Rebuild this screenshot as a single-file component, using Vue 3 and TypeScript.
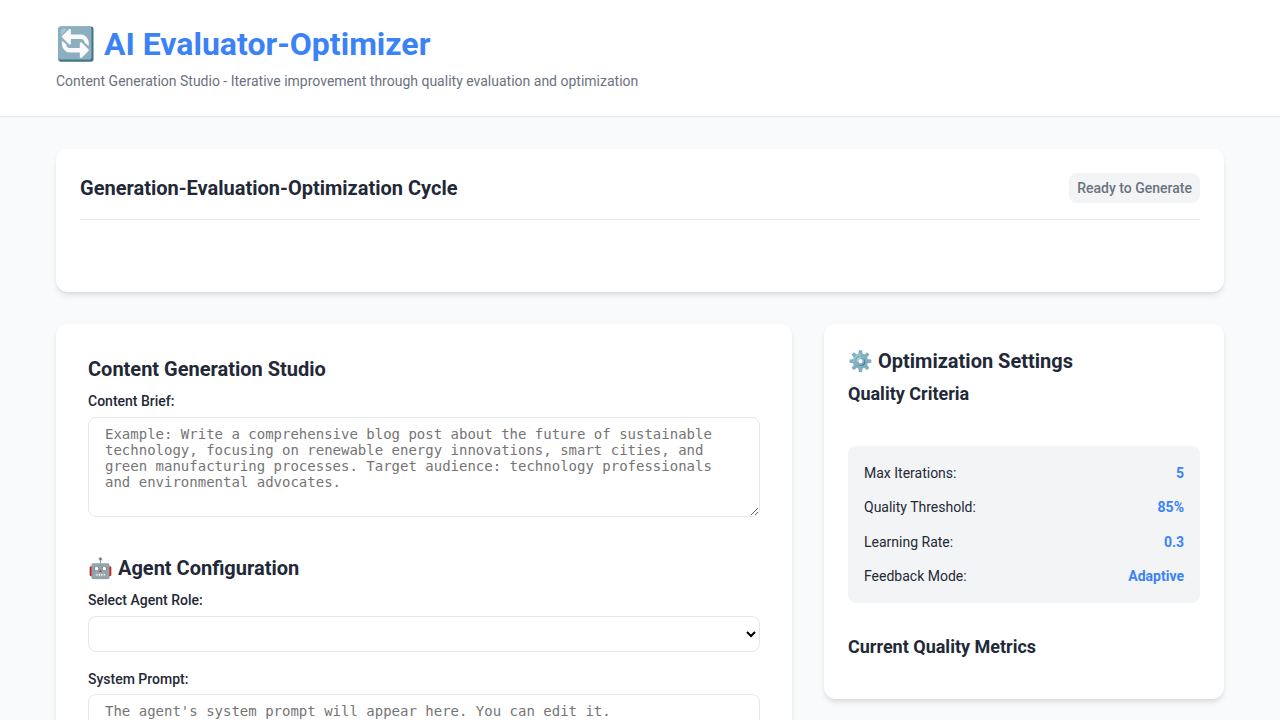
<script setup lang="ts">
import { ref } from 'vue'

interface Setting {
  label: string
  value: string
}

const brief = ref('')
const role = ref('')
const prompt = ref('')
const settings: Setting[] = [
  { label: 'Max Iterations:', value: '5' },
  { label: 'Quality Threshold:', value: '85%' },
  { label: 'Learning Rate:', value: '0.3' },
  { label: 'Feedback Mode:', value: 'Adaptive' },
]
</script>

<template>
  <div class="page">
    <header class="header">
      <h1>🔄 AI Evaluator-Optimizer</h1>
      <p>Content Generation Studio - Iterative improvement through quality evaluation and optimization</p>
    </header>
    <main class="main">
      <section class="card cycle">
        <div class="cycle-head">
          <h2>Generation-Evaluation-Optimization Cycle</h2>
          <span class="status">Ready to Generate</span>
        </div>
      </section>
      <div class="columns">
        <section class="card studio">
          <h2>Content Generation Studio</h2>
          <label for="brief">Content Brief:</label>
          <textarea
            id="brief"
            v-model="brief"
            class="brief"
            placeholder="Example: Write a comprehensive blog post about the future of sustainable technology, focusing on renewable energy innovations, smart cities, and green manufacturing processes. Target audience: technology professionals and environmental advocates."
          ></textarea>
          <h2 class="agent-title">🤖 Agent Configuration</h2>
          <label for="role">Select Agent Role:</label>
          <select id="role" v-model="role"></select>
          <label for="prompt" class="prompt-label">System Prompt:</label>
          <textarea
            id="prompt"
            v-model="prompt"
            class="prompt"
            placeholder="The agent's system prompt will appear here. You can edit it."
          ></textarea>
        </section>
        <aside class="card side">
          <h2>⚙️ Optimization Settings</h2>
          <h3>Quality Criteria</h3>
          <div class="settings">
            <div v-for="item in settings" :key="item.label" class="row">
              <span>{{ item.label }}</span>
              <strong>{{ item.value }}</strong>
            </div>
          </div>
          <h3>Current Quality Metrics</h3>
        </aside>
      </div>
    </main>
  </div>
</template>

<style>
body {
  margin: 0;
  overflow: hidden;
}
</style>

<style scoped>
* {
  box-sizing: border-box;
  margin: 0;
  -webkit-font-smoothing: antialiased;
}
.page {
  height: 720px;
  overflow: hidden;
  background: #f9fafb;
  color: #1f2937;
  font-family: Roboto, sans-serif;
  font-size: 16px;
  line-height: 1.6;
}
.header {
  height: 117px;
  padding: 24px 56px;
  background: #fff;
  border-bottom: 1px solid #e5e7eb;
}
h1 {
  margin-bottom: 6px;
  font-size: 32px;
  line-height: 40px;
  font-weight: 700;
  color: #3b82f6;
}
.header p {
  font-size: 14px;
  line-height: 22px;
  color: #6b7280;
}
.main {
  padding: 32px 56px;
}
.card {
  background: #fff;
  border-radius: 12px;
  box-shadow: 0 4px 6px -1px rgba(0, 0, 0, 0.1), 0 2px 4px -1px rgba(0, 0, 0, 0.06);
}
.cycle {
  height: 143px;
  margin-bottom: 32px;
  padding: 24px;
}
.cycle-head {
  display: flex;
  align-items: center;
  justify-content: space-between;
  padding-bottom: 16px;
  border-bottom: 1px solid #e5e7eb;
}
h2 {
  font-size: 20px;
  line-height: 26px;
  font-weight: 700;
}
.status {
  padding: 4px 8px;
  border-radius: 8px;
  background: #f3f4f6;
  color: #6b7280;
  font-size: 14px;
  line-height: 22px;
  font-weight: 500;
}
.columns {
  display: grid;
  grid-template-columns: 1fr 400px;
  align-items: start;
  gap: 32px;
}
.studio {
  padding: 32px;
}
label {
  display: block;
  margin: 8px 0 5px;
  font-size: 14px;
  line-height: 22px;
  font-weight: 500;
}
.prompt-label {
  margin-bottom: 4px;
}
textarea,
select {
  display: block;
  width: 100%;
  border: 1px solid #e5e7eb;
  border-radius: 8px;
  background: #fff;
  font-size: 14px;
}
textarea {
  padding: 8px 16px;
  font-family: monospace;
  line-height: 16px;
  resize: vertical;
}
.brief {
  height: 100px;
}
.agent-title {
  margin-top: 38px;
}
select {
  height: 36px;
  margin-bottom: 16px;
  padding: 8px;
}
.prompt {
  height: 120px;
}
.side {
  height: 375px;
  padding: 24px;
}
h3 {
  margin-top: 7px;
  font-size: 18px;
  line-height: 26px;
  font-weight: 700;
}
.settings {
  display: flex;
  flex-direction: column;
  gap: 12px;
  margin: 38.8px 0 31px;
  padding: 16px;
  border-radius: 8px;
  background: #f3f4f6;
}
.row {
  display: flex;
  justify-content: space-between;
  font-size: 14px;
  line-height: 22.4px;
}
.row strong {
  color: #3b82f6;
  font-weight: 700;
}
</style>
